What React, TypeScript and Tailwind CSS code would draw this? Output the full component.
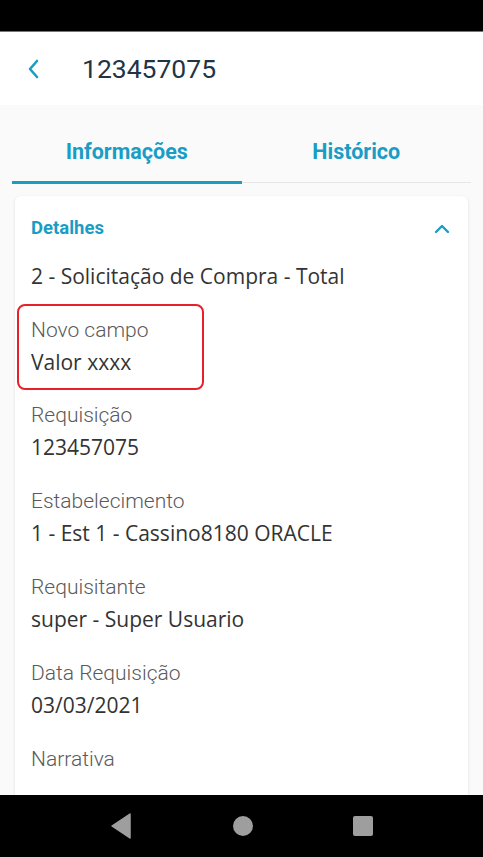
import React from 'react';

const fields = [
  { label: 'Requisição', value: '123457075' },
  { label: 'Estabelecimento', value: '1 - Est 1 - Cassino8180 ORACLE' },
  { label: 'Requisitante', value: 'super - Super Usuario' },
  { label: 'Data Requisição', value: '03/03/2021' },
  { label: 'Narrativa', value: '' },
];

const Field: React.FC<{ label: string; value: string }> = ({ label, value }) => (
  <div>
    <div className="text-[21px] leading-[32px] font-light text-[#5a5a5a]">{label}</div>
    {value && (
      <div className="font-['Open_Sans',sans-serif] text-[21px] leading-[32px] text-[#333]">{value}</div>
    )}
  </div>
);

const App: React.FC = () => {
  return (
    <div className="h-[857px] w-[483px] flex flex-col overflow-hidden bg-[#fafafa] font-['Roboto',sans-serif]">
      <div className="h-8 shrink-0 bg-black border-b border-[#777]" />

      <header className="h-[73px] shrink-0 bg-white flex items-center">
        <svg width="14" height="22" viewBox="0 0 14 22" className="ml-[26px]">
          <path d="M11 3 L4 11 L11 19" fill="none" stroke="#1a9dc4" strokeWidth="2.6" strokeLinecap="round" strokeLinejoin="round" />
        </svg>
        <h1 className="ml-[42px] text-[26.5px] text-[#1f3545]">123457075</h1>
      </header>

      <main className="flex-1 overflow-hidden">
        <div className="mx-3 mt-[34px] flex border-b border-[#e6e6e6]">
          <div className="flex-1 text-center text-[21.5px] leading-[26px] font-bold text-[#1a9dc4] pb-[16px] border-b-[3px] border-[#1a9dc4] -mb-[2px]">
            Informações
          </div>
          <div className="flex-1 text-center text-[21.5px] leading-[26px] font-bold text-[#1a9dc4] pb-[16px]">Histórico</div>
        </div>

        <section className="mx-[15px] mt-[13px] bg-white rounded-md shadow-[0_1px_3px_rgba(0,0,0,0.12)] px-4 pt-[21px] h-[700px]">
          <div className="flex items-center justify-between h-[24px]">
            <span className="text-[18.5px] font-bold text-[#1a9dc4]">Detalhes</span>
            <svg width="16" height="10" viewBox="0 0 16 10" className="mr-[2px]">
              <path d="M2 8 L8 2 L14 8" fill="none" stroke="#1a9dc4" strokeWidth="2.4" strokeLinecap="round" strokeLinejoin="round" />
            </svg>
          </div>
          <div className="mt-[19px] font-['Open_Sans',sans-serif] text-[21px] leading-[32px] text-[#333]">
            2 - Solicitação de Compra - Total
          </div>

          <div className="mt-[12px] -ml-[14px] w-[187px] border-2 border-[#e8202a] rounded-lg pl-3 pt-2 pb-[10px]">
            <Field label="Novo campo" value="Valor xxxx" />
          </div>

          <div className="mt-[9px] flex flex-col gap-[22px]">
            {fields.map((f) => (
              <Field key={f.label} label={f.label} value={f.value} />
            ))}
          </div>
        </section>
      </main>

      <nav className="h-[62px] shrink-0 bg-black flex items-center">
        <svg width="20" height="26" viewBox="0 0 20 26" className="ml-[111px]">
          <path d="M19 1 L19 25 L1 13 Z" fill="#9e9e9e" stroke="#9e9e9e" strokeLinejoin="round" strokeWidth="1.5" />
        </svg>
        <div className="ml-[102px] w-[20px] h-[20px] rounded-full bg-[#9e9e9e]" />
        <div className="ml-[100px] w-[20px] h-[20px] rounded-[2px] bg-[#9e9e9e]" />
      </nav>
    </div>
  );
};

export default App;
